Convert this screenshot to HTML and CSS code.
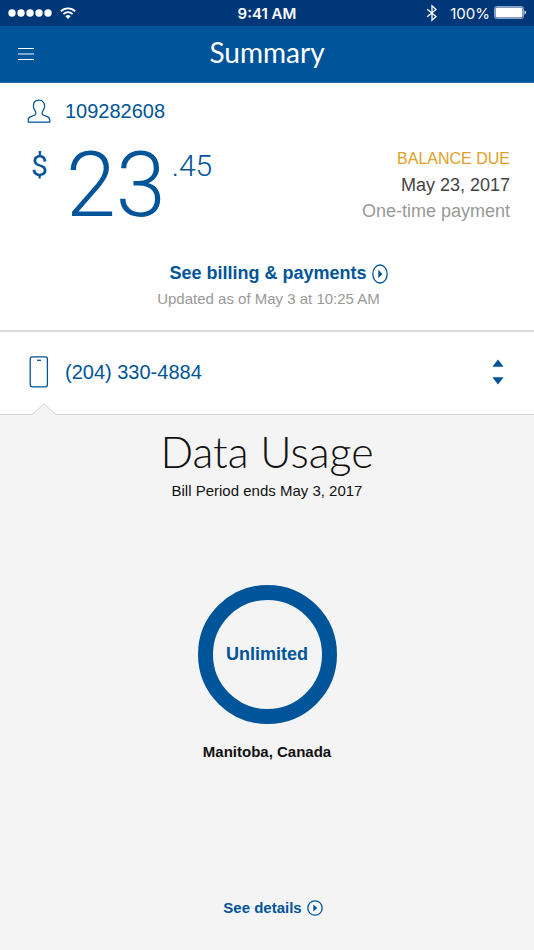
FILE: index.html
```html
<!DOCTYPE html>
<html lang="en">
<head>
  <meta charset="UTF-8">
  <meta name="viewport" content="width=device-width, initial-scale=1.0">
  <title>Summary</title>
  <link rel="stylesheet" href="styles.css">
</head>
<body>
  <div class="status-bar">
    <div class="status-left">
      <svg width="44" height="8" viewBox="0 0 44 8" fill="#fff">
        <circle cx="4" cy="4" r="3.7" />
        <circle cx="13" cy="4" r="3.7" />
        <circle cx="22" cy="4" r="3.7" />
        <circle cx="31" cy="4" r="3.7" />
        <circle cx="40" cy="4" r="3.7" />
      </svg>
      <svg width="16" height="12" viewBox="0 0 16 12" fill="none" stroke="#fff" stroke-width="1.8">
        <path d="M0.8 4.4a10.2 10.2 0 0 1 14.4 0" />
        <path d="M3.4 7.1a6.5 6.5 0 0 1 9.2 0" />
        <path d="M8 12L5.4 9.3a3.7 3.7 0 0 1 5.2 0z" fill="#fff" stroke="none" />
      </svg>
    </div>
    <div class="status-time">9:41 AM</div>
    <div class="status-right">
      <svg class="bluetooth" width="12" height="18" viewBox="0 0 12 18" fill="none" stroke="#fff" stroke-width="1.3">
        <path d="M1.2 5.2L10 12.6L6 16.3V1.7L10 5.4L1.2 12.8" />
      </svg>
      <span>100%</span>
      <svg width="32" height="14" viewBox="0 0 32 14">
        <rect x="0.5" y="0.5" width="29" height="12" rx="2" fill="none" stroke="#8aa5cb" />
        <rect x="1.5" y="1.5" width="27" height="10" rx="1" fill="#fff" />
        <path d="M30.5 4.5q1.5 0.6 1.5 2t-1.5 2z" fill="#fff" />
      </svg>
    </div>
  </div>

  <header class="header">
    <button class="menu-btn" aria-label="Menu">
      <svg width="16" height="14" viewBox="0 0 16 14" stroke="#fff" stroke-width="1.2">
        <path d="M0 1.5h16M0 7h16M0 12.5h16" />
      </svg>
    </button>
    <h1>Summary</h1>
  </header>

  <main>
    <section class="account">
      <div class="account-number">
        <svg width="24" height="24" viewBox="0 0 24 24" fill="none" stroke="#00549a" stroke-width="1.2" stroke-linejoin="round">
          <path d="M12 1.2C8.5 1.2 6.4 3.6 6.4 7c0 2.2 0.7 3.7 1.8 5 1.1 1.4 0.9 3.5-0.8 4.2L3.7 17.6C1.9 18.3 1.2 19.6 1.2 21.2v1.9h21.6v-1.9c0-1.6-0.7-2.9-2.5-3.6l-3.7-1.4c-1.7-0.7-1.9-2.8-0.8-4.2 1.1-1.3 1.8-2.8 1.8-5 0-3.4-2.1-5.8-5.6-5.8z" />
        </svg>
        <span>109282608</span>
      </div>
      <div class="balance">
        <div class="amount">
          <span class="currency">$</span>
          <span class="dollars">23</span>
          <span class="cents">.45</span>
        </div>
        <div class="due">
          <p class="due-label">BALANCE DUE</p>
          <p class="due-date">May 23, 2017</p>
          <p class="due-type">One-time payment</p>
        </div>
      </div>
      <div class="billing">
        <a href="#" class="link">See billing &amp; payments
          <svg width="16" height="20" viewBox="0 0 16 20">
            <ellipse cx="8" cy="10" rx="7.2" ry="9" fill="none" stroke="#00549a" stroke-width="1.3" />
            <path d="M6.3 5.8v8.4L10.3 10z" fill="#00549a" />
          </svg>
        </a>
        <p class="updated">Updated as of May 3 at 10:25 AM</p>
      </div>
    </section>

    <section class="line">
      <svg width="20" height="32" viewBox="0 0 20 32" fill="none" stroke="#00549a" stroke-width="1.3">
        <rect x="1.2" y="0.8" width="17.2" height="30" rx="2.2" />
        <path d="M8 4.3h4" />
      </svg>
      <select class="line-select" aria-label="Phone number">
        <option>(204) 330-4884</option>
      </select>
      <svg class="line-arrows" width="12" height="26" viewBox="0 0 12 26" fill="#00549a">
        <path d="M6 0.4L11.6 7.8H0.4z" />
        <path d="M6 25.6L11.6 18.2H0.4z" />
      </svg>
    </section>

    <section class="usage">
      <svg class="pointer" width="24" height="12" viewBox="0 0 24 12">
        <path d="M0 12L1 11L12 0.7L23 11L24 12z" fill="#f4f4f4" />
        <path d="M0.5 11.5L12 0.7L23.5 11.5" fill="none" stroke="#d4d4d4" />
      </svg>
      <h2>Data Usage</h2>
      <p class="period">Bill Period ends May 3, 2017</p>
      <div class="ring">Unlimited</div>
      <p class="region">Manitoba, Canada</p>
      <a href="#" class="link link--details">See details
        <svg width="16" height="16" viewBox="0 0 16 16">
          <circle cx="8" cy="8" r="7.2" fill="none" stroke="#00549a" stroke-width="1.3" />
          <path d="M6.3 4.6v6.8L10.3 8z" fill="#00549a" />
        </svg>
      </a>
    </section>
  </main>
</body>
</html>
```
FILE: styles.css
```css
* {
  box-sizing: border-box;
}

body {
  margin: 0;
  min-height: 100vh;
  display: flex;
  flex-direction: column;
  font-family: "Liberation Sans", Arial, sans-serif;
  background-color: #fff;
  color: #111;
}

h1,
h2,
p {
  margin: 0;
}

svg {
  flex: none;
}

/* Status bar */
.status-bar {
  display: grid;
  grid-template-columns: 1fr auto 1fr;
  align-items: center;
  height: 26px;
  padding: 0 8px;
  background-color: #003778;
  color: #fff;
  font-family: Inter, sans-serif;
  font-size: 16px;
}

.status-left,
.status-right {
  display: flex;
  align-items: center;
  gap: 8px;
}

.status-right {
  justify-content: flex-end;
  gap: 4px;
  font-size: 15px;
}

.bluetooth {
  margin-right: 8px;
}

.status-time {
  font-weight: 600;
  font-size: 15px;
}

/* Header */
.header {
  display: grid;
  grid-template-columns: 1fr auto 1fr;
  align-items: center;
  height: 57px;
  padding: 0 12px;
  background-color: #00549a;
  border-bottom: 1px solid #2a71ab;
  color: #fff;
}

.header h1 {
  padding-bottom: 4px;
  font-family: Lato, sans-serif;
  font-size: 28px;
  font-weight: 400;
  line-height: 52px;
}

.menu-btn {
  display: flex;
  justify-self: start;
  padding: 6px;
  background: none;
  border: none;
  cursor: pointer;
}

main {
  flex: 1;
  display: flex;
  flex-direction: column;
}

/* Account */
.account {
  padding: 16px 24px 16px 27px;
  border-bottom: 2px solid #dadada;
}

.account-number {
  display: flex;
  align-items: center;
  gap: 14px;
  height: 24px;
  font-size: 20px;
  color: #00549a;
}

.balance {
  display: flex;
  justify-content: space-between;
  margin-top: 20px;
}

.amount {
  display: flex;
  align-items: flex-start;
  padding-left: 4px;
  color: #00549a;
  font-family: Roboto, sans-serif;
  font-weight: 300;
}

.currency {
  font-size: 30px;
  font-weight: 400;
  line-height: 46px;
}

.dollars {
  margin: 0 6px 0 18px;
  font-size: 90px;
  line-height: 86px;
}

.cents {
  font-size: 30px;
  line-height: 46px;
}

.due {
  padding-top: 3px;
  text-align: right;
  font-size: 18px;
  line-height: 26px;
}

.due-label {
  font-size: 16px;
  color: #e0a126;
}

.due-date {
  color: #444;
}

.due-type {
  color: #999;
}

.billing {
  margin-top: 34px;
  text-align: center;
}

.link {
  display: inline-flex;
  align-items: center;
  gap: 5px;
  color: #00549a;
  font-size: 18px;
  font-weight: bold;
  text-decoration: none;
}

.billing .link {
  padding-left: 20px;
}

.updated {
  color: #999;
  font-size: 15px;
  line-height: 30px;
}

/* Phone line */
.line {
  display: flex;
  align-items: center;
  gap: 16px;
  height: 82px;
  padding: 0 30px 2px 29px;
}

.line-select {
  flex: 1;
  padding: 0;
  appearance: none;
  background: none;
  border: none;
  color: #00549a;
  font-family: inherit;
  font-size: 20px;
  cursor: pointer;
}

.line-arrows {
  pointer-events: none;
}

/* Usage */
.usage {
  position: relative;
  flex: 1;
  display: flex;
  flex-direction: column;
  align-items: center;
  padding: 10px 24px 34px;
  background-color: #f4f4f4;
  border-top: 1px solid #d4d4d4;
  text-align: center;
}

.pointer {
  position: absolute;
  top: -12px;
  left: 32px;
}

.usage h2 {
  font-family: Lato, sans-serif;
  font-size: 43px;
  font-weight: 300;
  line-height: 54px;
}

.period {
  font-size: 15px;
  line-height: 24px;
}

.ring {
  display: flex;
  align-items: center;
  justify-content: center;
  width: 139px;
  height: 139px;
  margin-top: 82px;
  border: 15px solid #00549a;
  border-radius: 50%;
  color: #00549a;
  font-size: 18px;
  font-weight: bold;
}

.region {
  margin-top: 16px;
  font-size: 15px;
  font-weight: bold;
  line-height: 24px;
}

.link--details {
  margin-top: auto;
  padding-left: 12px;
  font-size: 15px;
}
```
